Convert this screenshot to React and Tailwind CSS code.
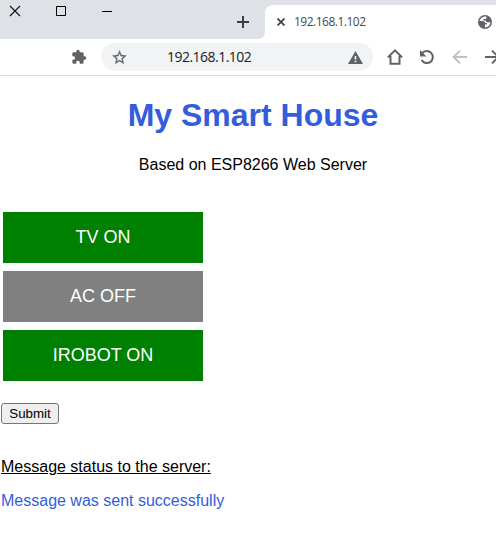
import React from 'react';

function TabStrip() {
  return (
    <div className="flex h-[39px] bg-[#dee1e6]">
      <svg className="shrink-0" width="265" height="39" viewBox="0 0 265 39" fill="none">
        <path d="M10 6l10 10M20 6L10 16" stroke="#111" strokeWidth="1.1" />
        <path d="M56.5 6.5h9v9h-9zM102 11.5h10" stroke="#000" />
        <path d="M243 16v12M237 22h12" stroke="#3c4043" strokeWidth="2" />
        <path d="M265 31q0 8-8 8h8z" fill="#fff" />
      </svg>
      <div className="mt-[5px] flex h-[34px] w-[231px] items-center rounded-tl-[8px] bg-white">
        <svg className="ml-[12px] shrink-0" width="8" height="8" viewBox="0 0 8 8">
          <path d="M.5 .5l7 7M7.5 .5l-7 7" stroke="#3c4043" strokeWidth="1.7" />
        </svg>
        <span className="ml-[9px] w-[184px] whitespace-nowrap font-['Open_Sans',sans-serif] text-[12px] leading-[16px] tracking-[-0.5px] text-[#45494d]">192.168.1.102</span>
        <svg className="shrink-0" width="14" height="14" viewBox="0 0 14 14">
          <circle cx="7" cy="7" r="7" fill="#5f6368" />
          <path d="M8.4 1.6C5.4 .9 2.2 2.8 1.5 6h3.3c1.5 0 2.2.8 2.2 2h2v1.6H6.9v2.8c3 0 5.4-2.3 5.5-5.2H9.2c-.9 0-1.4-.6-1.4-1.6H5.4V3.9h2.2c.7 0 .8-.8.8-2.3z" fill="#fff" />
        </svg>
      </div>
    </div>
  );
}

function Toolbar() {
  return (
    <div className="flex h-[37px] items-center border-b border-[#dadce0] bg-white pl-[71px]">
      <svg className="shrink-0" width="16" height="16" viewBox="0 0 24 24" fill="#5f6368">
        <path d="M20.5 11H19V7c0-1.1-.9-2-2-2h-4V3.5a2.5 2.5 0 0 0-5 0V5H4c-1.1 0-2 .9-2 2v3.8h1.5a2.7 2.7 0 0 1 0 5.4H2V20c0 1.1.9 2 2 2h3.8v-1.5a2.7 2.7 0 0 1 5.4 0V22H17c1.1 0 2-.9 2-2v-4h1.5a2.5 2.5 0 0 0 0-5z" />
      </svg>
      <div className="ml-[14px] flex h-[28px] w-[272px] shrink-0 items-center rounded-full bg-[#f1f3f4] pl-[10px]">
        <svg className="shrink-0" width="17" height="17" viewBox="0 0 24 24" fill="#5f6368" stroke="#5f6368" strokeWidth=".3">
          <path d="M22 9.24l-7.19-.62L12 2 9.19 8.63 2 9.24l5.46 4.73L5.82 21 12 17.27 18.18 21l-1.63-7.03zM12 15.4l-3.76 2.27 1-4.28-3.32-2.88 4.38-.38L12 6.1l1.71 4.04 4.38.38-3.32 2.88 1 4.28z" />
        </svg>
        <span className="ml-[39px] w-[181px] whitespace-nowrap font-['Open_Sans',sans-serif] text-[14px] leading-[20px] tracking-[-0.52px] text-[#202124]">192.168.1.102</span>
        <svg className="shrink-0" width="15" height="13" viewBox="0 0 15 13">
          <path d="M7.5 0L15 13H0z" fill="#5f6368" />
          <path d="M6.7 5h1.6v3.5H6.7zM6.7 9.7h1.6v1.5H6.7z" fill="#fff" />
        </svg>
      </div>
      <svg className="shrink-0" width="123" height="28" viewBox="0 0 123 28" fill="none" stroke="#5f6368" strokeWidth="2">
        <path d="M14.8 14.4L22 7.4l7.2 7M17.5 12.8v8h9v-8" />
        <path d="M49.2 10.2A6 6 0 1 1 48.6 17" />
        <path d="M47 7v6.4h6.4z" fill="#5f6368" stroke="none" />
        <path d="M94 14H80.8M87 7.6L80.6 14l6.4 6.4" stroke="#bdc0c4" />
        <path d="M112 14h13M119 7.6l6.4 6.4-6.4 6.4" />
      </svg>
    </div>
  );
}

const devices = [
  { label: 'TV ON', on: true },
  { label: 'AC OFF', on: false },
  { label: 'IROBOT ON', on: true },
];

export default function App() {
  return (
    <div className="h-[537px] w-[496px] overflow-hidden bg-white font-['Liberation_Sans',Arial,sans-serif] text-[16px] text-black">
      <TabStrip />
      <Toolbar />
      <main className="flex flex-col items-start">
        <header className="mt-[21px] w-full pl-[10px] text-center">
          <h1 className="text-[32px] leading-[37px] font-bold text-[#345ddb]">My Smart House</h1>
          <p className="mt-[22px] leading-[18px]">Based on ESP8266 Web Server</p>
        </header>
        <div className="mt-[38px] ml-[3px] flex flex-col gap-[8px]">
          {devices.map((d) => (
            <button key={d.label} className={`h-[51px] w-[200px] text-[18px] leading-[21px] text-white ${d.on ? 'bg-[#008000]' : 'bg-[#808080]'}`}>
              {d.label}
            </button>
          ))}
        </div>
        <button className="mt-[22px] ml-px h-[21px] w-[58px] rounded-[3px] border border-[#767676] bg-[#efefef] text-[13.333px] leading-[15px]">Submit</button>
        <p className="mt-[34px] ml-px leading-[18px] underline">Message status to the server:</p>
        <p className="mt-[16px] ml-px leading-[18px] text-[#345ddb]">Message was sent successfully</p>
      </main>
    </div>
  );
}
